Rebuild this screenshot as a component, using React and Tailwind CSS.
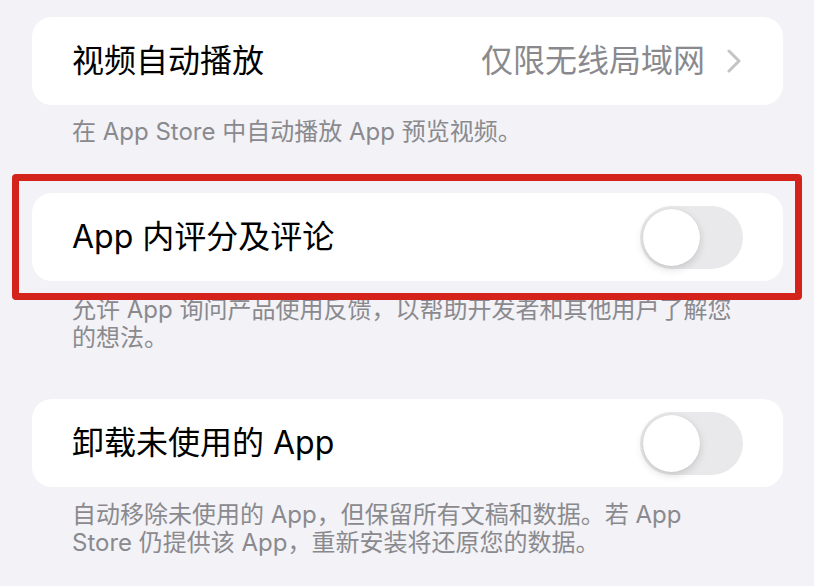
import { useState } from 'react';

const font = { fontFamily: 'Inter, "Noto Sans CJK SC", sans-serif' };

function Toggle({ on, onChange }) {
  return (
    <button
      type="button"
      onClick={() => onChange(!on)}
      className={`relative h-[63px] w-[103px] shrink-0 rounded-full ${on ? 'bg-[#34c759]' : 'bg-[#e9e9eb]'}`}
    >
      <span
        className={`absolute top-[3px] h-[57px] w-[57px] rounded-full bg-white shadow-[0_3px_8px_rgba(0,0,0,0.15),0_0_1px_rgba(0,0,0,0.12)] ${on ? 'left-[43px]' : 'left-[3px]'}`}
      />
    </button>
  );
}

function Footer({ lines, className = '' }) {
  return (
    <div className={`px-[41px] text-[24px] leading-[28px] text-[#8a8a8e] ${className}`}>
      {lines.map((line) => (
        <p key={line} className="whitespace-nowrap">{line}</p>
      ))}
    </div>
  );
}

export default function App() {
  const [ratings, setRatings] = useState(false);
  const [offload, setOffload] = useState(false);

  return (
    <div className="relative min-h-[586px] w-[814px] overflow-hidden bg-[#f2f2f7] pl-[32px] pr-[31px] pt-[17px]" style={font}>
      <div className="flex h-[88px] items-center justify-between rounded-[20px] bg-white pl-[40px] pr-[42px]">
        <span className="text-[32px] text-black">视频自动播放</span>
        <div className="flex items-center gap-[22px] text-[32px] text-[#8a8a8e]">
          <span>仅限无线局域网</span>
          <svg width="14" height="24" viewBox="0 0 14 24" fill="none">
            <path d="M2 2l10 10-10 10" stroke="#c4c4c7" strokeWidth="3" strokeLinecap="round" strokeLinejoin="round" />
          </svg>
        </div>
      </div>
      <Footer className="-mx-[32px] mt-[13px] px-[72px]" lines={['在 App Store 中自动播放 App 预览视频。']} />

      <div className="mt-[47px] flex h-[88px] items-center justify-between rounded-[20px] bg-white pl-[40px] pr-[40px]">
        <span className="text-[32px] text-black">App 内评分及评论</span>
        <Toggle on={ratings} onChange={setRatings} />
      </div>
      <Footer
        className="-mx-[32px] mt-[15px] px-[72px]"
        lines={['允许 App 询问产品使用反馈，以帮助开发者和其他用户了解您', '的想法。']}
      />

      <div className="mt-[47px] flex h-[88px] items-center justify-between rounded-[20px] bg-white pl-[40px] pr-[40px]">
        <span className="text-[32px] text-black">卸载未使用的 App</span>
        <Toggle on={offload} onChange={setOffload} />
      </div>
      <Footer
        className="-mx-[32px] mt-[14px] px-[72px]"
        lines={['自动移除未使用的 App，但保留所有文稿和数据。若 App', 'Store 仍提供该 App，重新安装将还原您的数据。']}
      />

      <div className="pointer-events-none absolute left-[12px] top-[174px] h-[126px] w-[790px] rounded-[4px] border-[7px] border-[#d4231a]" />
    </div>
  );
}
